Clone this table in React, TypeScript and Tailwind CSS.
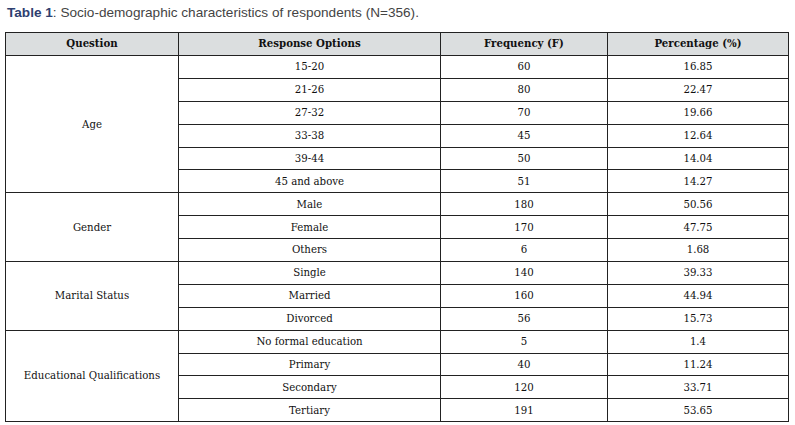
import React from "react";

type Group = { question: string; rows: [string, string, string][] };

const groups: Group[] = [
  {
    question: "Age",
    rows: [
      ["15-20", "60", "16.85"],
      ["21-26", "80", "22.47"],
      ["27-32", "70", "19.66"],
      ["33-38", "45", "12.64"],
      ["39-44", "50", "14.04"],
      ["45 and above", "51", "14.27"],
    ],
  },
  {
    question: "Gender",
    rows: [
      ["Male", "180", "50.56"],
      ["Female", "170", "47.75"],
      ["Others", "6", "1.68"],
    ],
  },
  {
    question: "Marital Status",
    rows: [
      ["Single", "140", "39.33"],
      ["Married", "160", "44.94"],
      ["Divorced", "56", "15.73"],
    ],
  },
  {
    question: "Educational Qualifications",
    rows: [
      ["No formal education", "5", "1.4"],
      ["Primary", "40", "11.24"],
      ["Secondary", "120", "33.71"],
      ["Tertiary", "191", "53.65"],
    ],
  },
];

const cell = "border border-[#222] text-center align-middle p-0";

export default function App() {
  return (
    <div className="w-[795px] h-[425px] bg-white overflow-hidden">
      <p className="pl-[7px] pt-[5px] text-[13.6px] leading-[16px] text-[#444] font-['Liberation_Sans',Arial,sans-serif]">
        <span className="font-bold text-[#2e4070]">Table 1</span>: Socio-demographic characteristics of respondents (N=356).
      </p>
      <table className="ml-[5px] mt-[11px] w-[783px] border-collapse table-fixed text-[10.2px] text-[#111] font-['DejaVu_Serif',serif]">
        <colgroup>
          <col className="w-[173px]" />
          <col className="w-[262px]" />
          <col className="w-[167px]" />
          <col className="w-[181px]" />
        </colgroup>
        <thead>
          <tr className="h-[23px] bg-[#dbdedf] font-bold">
            <th className={cell}>Question</th>
            <th className={cell}>Response Options</th>
            <th className={cell}>Frequency (F)</th>
            <th className={cell}>Percentage (%)</th>
          </tr>
        </thead>
        <tbody>
          {groups.map((g) =>
            g.rows.map((r, i) => (
              <tr key={g.question + r[0]} className="h-[22.9px]">
                {i === 0 && (
                  <td rowSpan={g.rows.length} className={cell}>
                    {g.question}
                  </td>
                )}
                <td className={cell}>{r[0]}</td>
                <td className={cell}>{r[1]}</td>
                <td className={cell}>{r[2]}</td>
              </tr>
            ))
          )}
        </tbody>
      </table>
    </div>
  );
}
